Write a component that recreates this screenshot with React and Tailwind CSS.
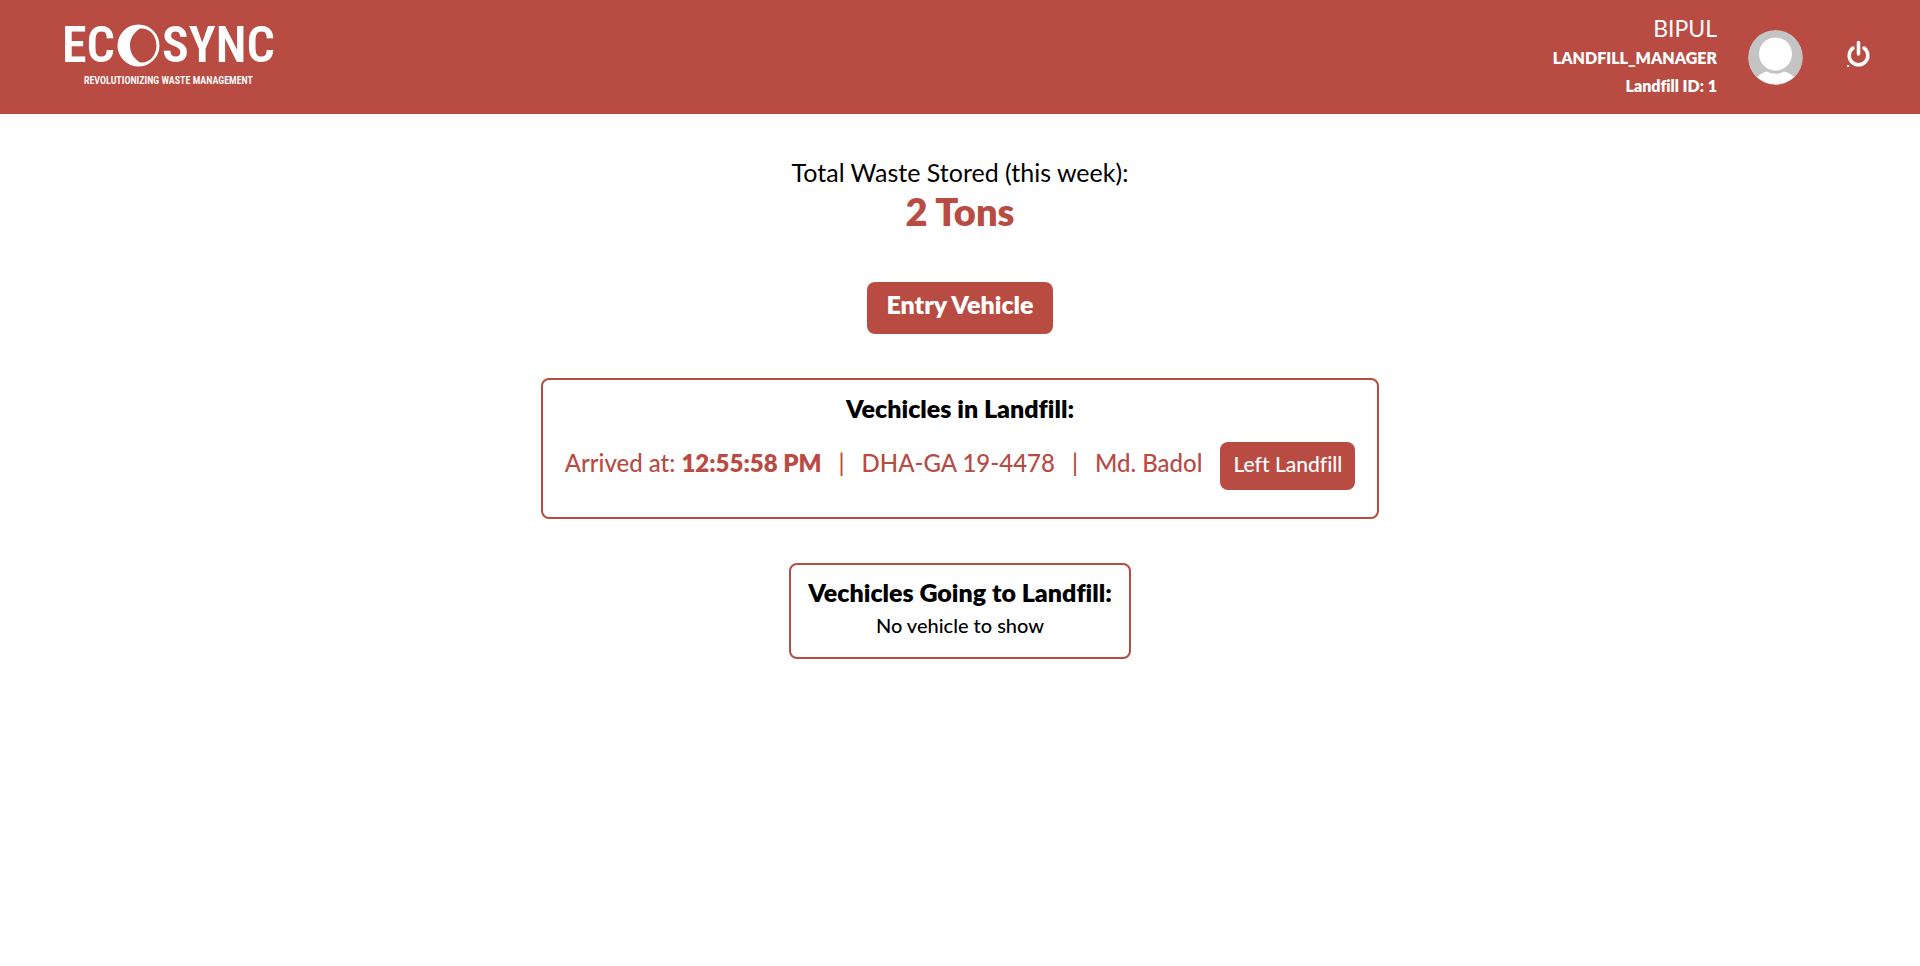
function Logo() {
  return (
    <a href="#home" aria-label="EcoSync home" className="flex flex-col items-center pb-2.5 text-white">
      <span className="flex h-14 items-center gap-0.5 font-['Roboto_Condensed','Liberation_Sans_Narrow','Liberation_Sans',sans-serif] text-[50px] leading-[56px] font-semibold">
        <span>EC</span>
        <svg viewBox="0 0 43 43" className="size-[43px]" fill="currentColor" aria-hidden="true">
          <path
            fillRule="evenodd"
            d="M21.5 0.5a21 21 0 1 0 0 42a21 21 0 1 0 0-42ZM23 4.5C31 3.5 39.500 10 39.500 21.5C39.500 32 32 39.500 23 38.500C16 34 13 28 13 21.500C13 15 16 9 23 4.500Z"
          />
        </svg>
        <span>SYNC</span>
      </span>
      <span className="mt-0.5 font-['Roboto_Condensed','Liberation_Sans_Narrow','Liberation_Sans',sans-serif] text-[10px] leading-3 font-semibold whitespace-nowrap">
        REVOLUTIONIZING WASTE MANAGEMENT
      </span>
    </a>
  );
}

function Avatar() {
  return (
    <svg viewBox="0 0 55 55" className="size-[55px] rounded-full" role="img" aria-label="Profile picture">
      <circle cx="27.500" cy="27.500" r="27.500" fill="#c4c4c4" />
      <circle cx="27.500" cy="24" r="16.500" fill="#fff" />
      <path d="M9 47C14 43 15 42.500 19 41.500C24 44.500 31 44.500 36 41.500C40 42.500 42 43.500 46 47A27.500 27.500 0 0 1 9 47Z" fill="#fff" />
    </svg>
  );
}

function Header() {
  return (
    <header className="flex h-[114px] items-center justify-between bg-[#b84c43] pr-[49px] pl-[62px] text-white">
      <Logo />
      <div className="flex items-center">
        <div className="flex flex-col pb-0.5 text-right">
          <span className="text-[23px] leading-8">BIPUL</span>
          <span className="text-base leading-7 font-extrabold">LANDFILL_MANAGER</span>
          <span className="text-base leading-7 font-extrabold">Landfill ID: 1</span>
        </div>
        <div className="ml-[31px]">
          <Avatar />
        </div>
        <button type="button" aria-label="Log out" className="ml-11 cursor-pointer pb-1.5">
          <svg viewBox="0 0 24 28" className="h-7 w-6" fill="none" stroke="currentColor" strokeWidth="3.500" strokeLinecap="round" aria-hidden="true">
            <path d="M11.500 2.500V14" />
            <path d="M6 8A9.300 9.300 0 1 0 17 8" />
            <path d="M0 25h2v2h-2z" fill="currentColor" stroke="none" />
          </svg>
        </button>
      </div>
    </header>
  );
}

function ArrivedVehicle({ time, plate, driver }) {
  return (
    <li className="flex items-baseline">
      <p className="flex gap-[17px] text-2xl leading-8 font-medium text-[#b84c43]">
        <span>
          Arrived at: <b className="font-extrabold">{time}</b>
        </span>
        <span>|</span>
        <span>{plate}</span>
        <span>|</span>
        <span>{driver}</span>
      </p>
      <button type="button" className="ml-[18px] cursor-pointer rounded-lg bg-[#b84c43] px-[13px] pt-2 pb-3 text-[21px] leading-7 font-medium text-white">
        Left Landfill
      </button>
    </li>
  );
}

export default function App() {
  return (
    <div className="min-h-screen bg-white font-['Lato',sans-serif] text-black [font-variant-ligatures:none]">
      <Header />
      <main className="flex flex-col items-center pt-10">
        <p className="text-[25px] leading-9">Total Waste Stored (this week):</p>
        <p className="text-[38px] leading-[42px] font-extrabold text-[#b84c43]">2 Tons</p>
        <button type="button" className="mt-[50px] cursor-pointer rounded-lg bg-[#b84c43] px-[19px] pt-1.5 pb-3.5 text-[25px] leading-8 font-extrabold text-white">
          Entry Vehicle
        </button>

        <section className="mt-11 flex flex-col items-center rounded-lg border-2 border-[#b84c43] px-[22px] pt-3 pb-[27px]">
          <h2 className="text-[25px] leading-8 font-extrabold">Vechicles in Landfill:</h2>
          <ul className="mt-[18px]">
            <ArrivedVehicle time="12:55:58 PM" plate="DHA-GA 19-4478" driver="Md. Badol" />
          </ul>
        </section>

        <section className="mt-11 flex flex-col items-center rounded-lg border-2 border-[#b84c43] px-[17px] pt-[11px] pb-[18px]">
          <h2 className="text-[25px] leading-8 font-extrabold">Vechicles Going to Landfill:</h2>
          <p className="mt-[3px] text-xl leading-7 font-medium">No vehicle to show</p>
        </section>
      </main>
    </div>
  );
}
